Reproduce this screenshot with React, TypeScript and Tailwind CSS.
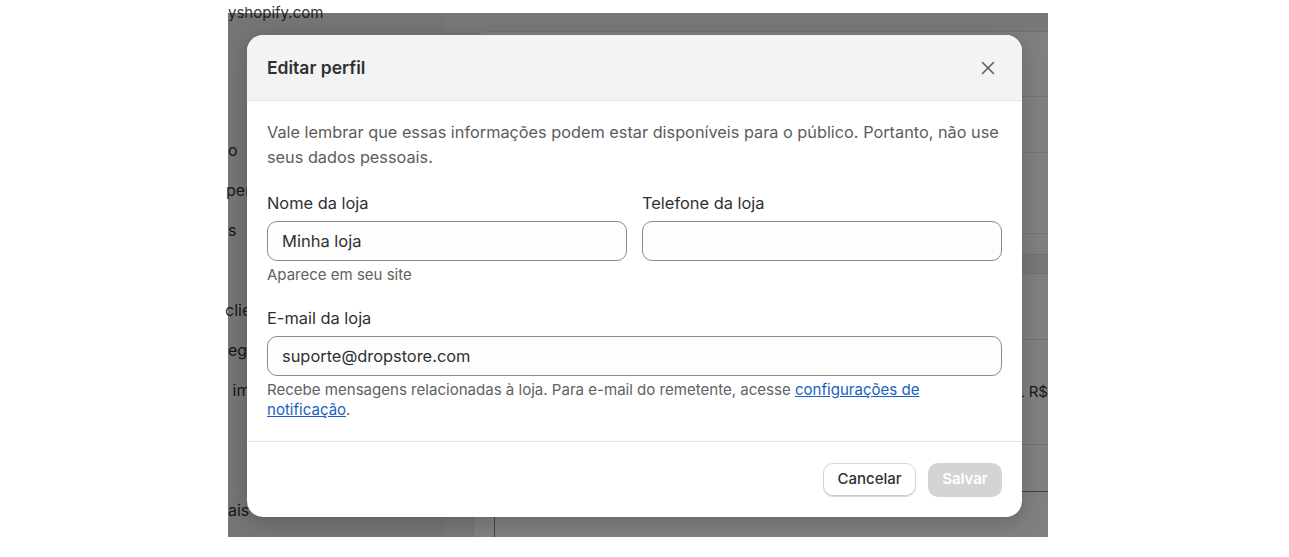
import React from 'react';

const sidebarItems = [
  { text: 'o', cls: 'mt-[117px] ml-0' },
  { text: 'permissões', cls: 'mt-[20px] -ml-[2px]' },
  { text: 's', cls: 'mt-[20px] ml-0' },
  { text: '', cls: 'mt-[20px] ml-0' },
  { text: 'clientes', cls: 'mt-[20px] -ml-[3px]' },
  { text: 'egião', cls: 'mt-[20px] ml-0' },
  { text: ' impostos', cls: 'mt-[20px] ml-0' },
  { text: '', cls: 'mt-[20px] ml-0' },
  { text: '', cls: 'mt-[20px] ml-0' },
  { text: 'ais', cls: 'mt-[20px] ml-0' },
];

function CloseIcon() {
  return (
    <svg width="20" height="20" viewBox="0 0 20 20" fill="none">
      <path d="M4.5 4.5l11 11M15.5 4.5l-11 11" stroke="#5e5e5e" strokeWidth="1.6" strokeLinecap="round" />
    </svg>
  );
}

function BackgroundPage() {
  return (
    <div className="flex h-full">
      {/* settings sidebar, mostly hidden by the modal */}
      <div className="w-[215px] shrink-0 bg-[#ebebeb] border-r border-[#e0e0e0]">
        <div className="-mt-[10px] h-[20px] text-[15px] leading-[20px] text-[#3a3a3a] whitespace-nowrap">yshopify.com</div>
        {sidebarItems.map((item, i) => (
          <div key={i} className={`h-[20px] text-[16px] leading-[20px] text-[#303030] whitespace-pre overflow-hidden ${item.cls}`}>
            {item.text}
          </div>
        ))}
      </div>

      {/* main content */}
      <div className="flex-1 bg-[#f1f1f1] pl-[30px] pt-[18px] overflow-hidden">
        <div className="w-[700px] bg-white rounded-[12px] border border-[#e3e3e3]">
          <div className="h-[65px] border-b border-[#e3e3e3]" />
          <div className="h-[56px] border-b border-[#e3e3e3]" />
          <div className="h-[81px] border-b border-[#e3e3e3]" />
          <div className="h-[20px]" />
        </div>
        <div className="mt-[18px] w-[700px] h-[300px] bg-white rounded-[12px] border border-[#e3e3e3]">
          <div className="h-[66px] border-b border-[#e3e3e3]" />
          <div className="h-[105px] border-b border-[#e3e3e3] flex items-center justify-end pr-[124px] text-[15px] text-[#303030]">L R$</div>
          <div className="h-[46px]" />
          <div className="mx-[20px] h-[60px] rounded-[10px] border border-[#8a8a8a]" />
        </div>
      </div>
    </div>
  );
}

export default function App() {
  return (
    <div className="w-[1289px] h-[557px] bg-white overflow-hidden" style={{ fontFamily: 'Inter, "Noto Sans", sans-serif' }}>
      <div className="ml-[228px] mt-[13px] w-[820px] h-[524px] relative">
        <BackgroundPage />
        <div className="absolute inset-0 bg-black/50" />

        <div className="absolute left-[19px] top-[22px] w-[775px] h-[482px] bg-white rounded-[16px] overflow-hidden flex flex-col shadow-[0_4px_20px_rgba(0,0,0,0.2)]">
          <div className="h-[66px] shrink-0 bg-[#f3f3f3] border-b border-[#e3e3e3] flex items-center justify-between pl-[20px] pr-[22px]">
            <h2 className="text-[17.5px] font-semibold text-[#303030] leading-[24px]">Editar perfil</h2>
            <button className="w-[24px] h-[24px] flex items-center justify-center">
              <CloseIcon />
            </button>
          </div>

          <div className="flex-1 px-[20px] pt-[19px]">
            <p className="text-[16.3px] leading-[25px] text-[#5c5c5c]">
              Vale lembrar que essas informações podem estar disponíveis para o público. Portanto, não use seus dados pessoais.
            </p>

            <div className="mt-[23px] grid grid-cols-2 gap-x-[15px] items-start">
              <div>
                <label className="block text-[16.4px] leading-[20px] text-[#303030]">Nome da loja</label>
                <div className="mt-[8px] h-[40px] rounded-[10px] border border-[#8a8a8a] bg-[#fdfdfd] px-[14px] flex items-center text-[16.5px] text-[#303030]">
                  Minha loja
                </div>
                <p className="mt-[4px] text-[15px] leading-[20px] text-[#616161]">Aparece em seu site</p>
              </div>
              <div>
                <label className="block text-[16.4px] leading-[20px] text-[#303030]">Telefone da loja</label>
                <div className="mt-[8px] h-[40px] rounded-[10px] border border-[#8a8a8a] bg-[#fdfdfd]" />
              </div>
            </div>

            <div className="mt-[23px]">
              <label className="block text-[16.4px] leading-[20px] text-[#303030]">E-mail da loja</label>
              <div className="mt-[8px] h-[40px] rounded-[10px] border border-[#8a8a8a] bg-[#fdfdfd] px-[14px] flex items-center text-[16.4px] text-[#303030]">
                suporte@dropstore.com
              </div>
              <p className="mt-[4px] w-[690px] text-[15.05px] leading-[20px] text-[#616161]">
                Recebe mensagens relacionadas à loja. Para e-mail do remetente, acesse{' '}
                <a className="text-[#1a5fbf] underline">configurações de notificação</a>.
              </p>
            </div>
          </div>

          <div className="h-[76px] shrink-0 border-t border-[#e3e3e3] flex items-center justify-end gap-[12px] px-[20px]">
            <button className="h-[34px] w-[93px] rounded-[10px] bg-white border border-[#d6d6d6] shadow-[inset_0_-1px_0_#c9c9c9] text-[15px] font-medium text-[#303030]">
              Cancelar
            </button>
            <button className="h-[34px] w-[74px] rounded-[10px] bg-[#d4d4d4] text-[15px] font-semibold text-white">
              Salvar
            </button>
          </div>
        </div>
      </div>
    </div>
  );
}
